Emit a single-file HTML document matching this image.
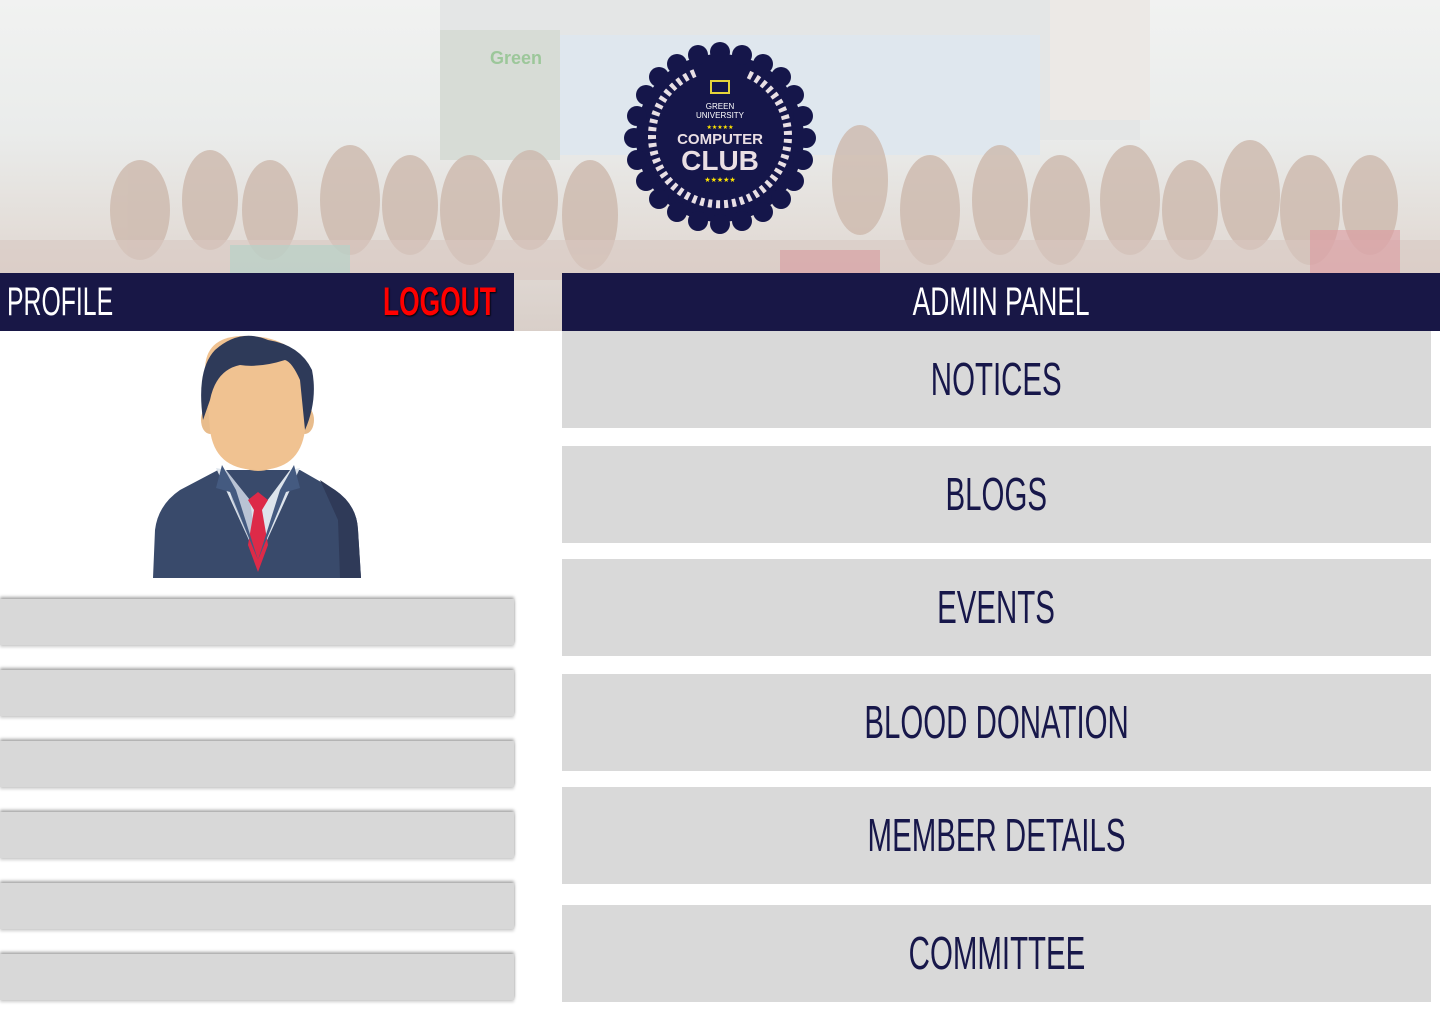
<!DOCTYPE html>
<html><head><meta charset="utf-8"><style>
body{margin:0;width:1440px;height:1024px;position:relative;overflow:hidden;background:#fff;font-family:"Liberation Sans Narrow","Liberation Sans",sans-serif}
.banner{position:absolute;left:0;top:0;width:1440px;height:331px;overflow:hidden;
background:linear-gradient(180deg,#f1f2f1 0%,#eaeceb 40%,#e3ddd8 70%,#d9cfc9 100%)}
.hdr{position:absolute;top:273px;height:58px;background:#181746;color:#fff;font-size:40px;line-height:58px}
.bar{position:absolute;left:0;width:514px;height:46px;background:#d8d8d8;box-shadow:0 -2px 3px rgba(0,0,0,.35),0 2px 3px rgba(0,0,0,.2)}
.box{position:absolute;left:562px;width:869px;height:97px;background:#d9d9d9;color:#17174a;font-size:46px;text-align:center;line-height:97px}
.box span{display:inline-block;transform:scaleX(.64)}
</style></head><body>
<div class="banner">
<svg width="1440" height="331" style="position:absolute;left:0;top:0">
<rect x="440" y="0" width="700" height="140" fill="#e4e6e6"/>
<rect x="560" y="35" width="480" height="120" fill="#dfe7ee"/>
<rect x="440" y="30" width="120" height="130" fill="#d7dcd6"/>
<rect x="1050" y="0" width="100" height="120" fill="#ece9e6"/>
<g fill="#cdb9ad" opacity=".8">
<ellipse cx="140" cy="210" rx="30" ry="50"/><ellipse cx="210" cy="200" rx="28" ry="50"/><ellipse cx="270" cy="210" rx="28" ry="50"/><ellipse cx="350" cy="200" rx="30" ry="55"/><ellipse cx="410" cy="205" rx="28" ry="50"/><ellipse cx="470" cy="210" rx="30" ry="55"/><ellipse cx="530" cy="200" rx="28" ry="50"/><ellipse cx="590" cy="215" rx="28" ry="55"/><ellipse cx="860" cy="180" rx="28" ry="55"/><ellipse cx="930" cy="210" rx="30" ry="55"/><ellipse cx="1000" cy="200" rx="28" ry="55"/><ellipse cx="1060" cy="210" rx="30" ry="55"/><ellipse cx="1130" cy="200" rx="30" ry="55"/><ellipse cx="1190" cy="210" rx="28" ry="50"/><ellipse cx="1250" cy="195" rx="30" ry="55"/><ellipse cx="1310" cy="210" rx="30" ry="55"/><ellipse cx="1370" cy="205" rx="28" ry="50"/>
</g>
<rect x="0" y="240" width="1440" height="40" fill="#d8c8c2" opacity=".6"/>
<rect x="780" y="250" width="100" height="30" fill="#d79a9e" opacity=".6"/>
<rect x="1310" y="230" width="90" height="50" fill="#dc9aa0" opacity=".6"/>
<rect x="230" y="245" width="120" height="30" fill="#b7d2c7" opacity=".7"/>
<text x="490" y="64" font-family="Liberation Sans" font-weight="bold" font-size="18" fill="#9cc79a">Green</text>
<g transform="translate(720,138)">
<circle r="84" fill="#15164a"/>
<g fill="#15164a">
<circle cx="0" cy="-86" r="10"/><circle cx="22" cy="-83" r="10"/><circle cx="43" cy="-74" r="10"/><circle cx="61" cy="-61" r="10"/><circle cx="74" cy="-43" r="10"/><circle cx="83" cy="-22" r="10"/><circle cx="86" cy="0" r="10"/><circle cx="83" cy="22" r="10"/><circle cx="74" cy="43" r="10"/><circle cx="61" cy="61" r="10"/><circle cx="43" cy="74" r="10"/><circle cx="22" cy="83" r="10"/><circle cx="0" cy="86" r="10"/><circle cx="-22" cy="83" r="10"/><circle cx="-43" cy="74" r="10"/><circle cx="-61" cy="61" r="10"/><circle cx="-74" cy="43" r="10"/><circle cx="-83" cy="22" r="10"/><circle cx="-86" cy="0" r="10"/><circle cx="-83" cy="-22" r="10"/><circle cx="-74" cy="-43" r="10"/><circle cx="-61" cy="-61" r="10"/><circle cx="-43" cy="-74" r="10"/><circle cx="-22" cy="-83" r="10"/>
</g>
<path d="M-25,-65 A68,68 0 1 0 25,-65" fill="none" stroke="#e8dfe4" stroke-width="8" stroke-dasharray="4 4"/>
<rect x="-9" y="-57" width="18" height="12" fill="none" stroke="#e6d43a" stroke-width="2"/>
<text y="-29" text-anchor="middle" font-family="Liberation Sans" font-size="8" fill="#fff">GREEN</text>
<text y="-20" text-anchor="middle" font-family="Liberation Sans" font-size="8" fill="#fff">UNIVERSITY</text>
<text y="-9" text-anchor="middle" font-size="6" fill="#ffe400">★★★★★</text>
<text y="6" text-anchor="middle" font-family="Liberation Sans" font-weight="bold" font-size="15" fill="#eadfe4">COMPUTER</text>
<text y="32" text-anchor="middle" font-family="Liberation Sans" font-weight="bold" font-size="28" fill="#eadfe4">CLUB</text>
<text y="44" text-anchor="middle" font-size="7" fill="#ffe400">★★★★★</text>
</g>
</svg>
</div>
<div style="position:absolute;left:514px;top:331px;width:48px;height:693px;background:#fff"></div>
<div class="hdr" style="left:0;width:514px"><span style="position:absolute;left:7px;display:inline-block;transform:scaleX(.62);transform-origin:left">PROFILE</span><span style="position:absolute;left:383px;color:#f00;font-weight:bold;display:inline-block;transform:scaleX(.66);transform-origin:left;text-shadow:1px 1px 2px #000">LOGOUT</span></div>
<div class="hdr" style="left:562px;width:878px;text-align:center"><span style="display:inline-block;transform:scaleX(.66)">ADMIN PANEL</span></div>
<svg style="position:absolute;left:150px;top:332px" width="215" height="248" viewBox="150 332 215 248">
<path d="M153,578 L155,530 Q158,505 180,490 L218,470 L300,470 L335,490 Q357,505 358,530 L361,578 Z" fill="#394a6b"/>
<path d="M320,480 L335,490 Q357,505 358,530 L361,578 L340,578 L338,520 Z" fill="#2f3a58"/>
<path d="M216,468 L258,560 L300,468 L290,470 L258,513 L226,470 Z" fill="#dde4ec"/>
<path d="M226,470 L232,500 L258,560 L250,500 Z" fill="#b9c3d4"/>
<path d="M248,500 L258,492 L268,500 L262,510 L268,545 L258,572 L248,545 L254,510 Z" fill="#dd2a48"/>
<path d="M222,465 L216,488 L230,492 L258,560 L236,490 Z M294,465 L300,488 L286,492 L258,560 L280,490 Z" fill="#445a80"/>
<path d="M233,430 L233,462 Q258,480 283,462 L283,430 Z" fill="#e2b88a"/>
<ellipse cx="210" cy="420" rx="9" ry="14" fill="#e8bc8c"/><ellipse cx="305" cy="420" rx="9" ry="14" fill="#e8bc8c"/>
<path d="M205,370 Q205,338 240,336 Q300,334 308,380 L305,430 Q300,470 258,470 Q215,470 210,430 Z" fill="#f0c291"/>
<path d="M203,420 Q196,370 215,350 Q240,328 268,340 Q300,345 312,370 Q318,400 305,430 L300,380 Q292,362 285,360 Q260,368 240,365 Q216,370 210,400 Z" fill="#2e3a59"/>
</svg>
<div class="bar" style="top:599px"></div>
<div class="bar" style="top:670px"></div>
<div class="bar" style="top:741px"></div>
<div class="bar" style="top:812px"></div>
<div class="bar" style="top:883px"></div>
<div class="bar" style="top:954px"></div>
<div class="box" style="top:331px"><span>NOTICES</span></div>
<div class="box" style="top:446px"><span>BLOGS</span></div>
<div class="box" style="top:559px"><span>EVENTS</span></div>
<div class="box" style="top:674px"><span>BLOOD DONATION</span></div>
<div class="box" style="top:787px"><span>MEMBER DETAILS</span></div>
<div class="box" style="top:905px"><span>COMMITTEE</span></div>
</body></html>
